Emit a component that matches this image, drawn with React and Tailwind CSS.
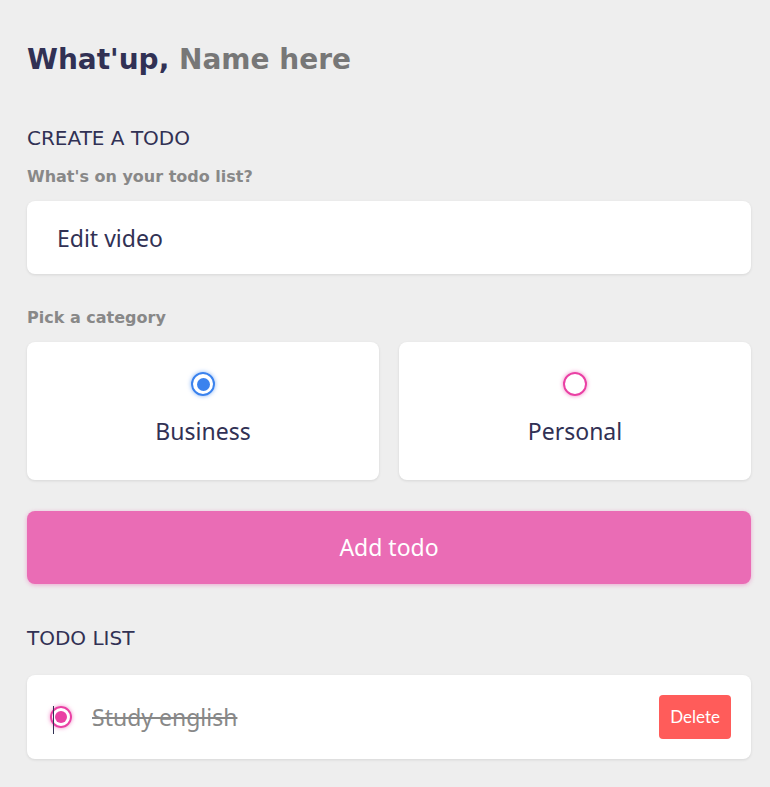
import { useState } from 'react';

const App = () => {
  const [category, setCategory] = useState('business');
  const [text, setText] = useState('Edit video');

  return (
    <div className="min-h-screen bg-[#eeeeee] pl-[27px] pr-[19px] pt-[38px] pb-8 font-['Noto_Sans',sans-serif] text-[#313154]">
      {/* Greeting */}
      <h2 className="font-['DejaVu_Sans',sans-serif] text-[28px] font-bold leading-[44px] text-[#313154]">
        What'up, <span className="text-[#777777]">Name here</span>
      </h2>

      {/* Create todo */}
      <section className="mt-[42px]">
        <h3 className="font-['DejaVu_Sans',sans-serif] text-[20px] leading-[28px] font-normal uppercase text-[#313154]">Create a todo</h3>
        <h4 className="mt-[13px] font-['DejaVu_Sans',sans-serif] text-[16px] leading-[24px] font-bold text-[#888888]">What's on your todo list?</h4>
        <input
          type="text"
          value={text}
          onChange={(e) => setText(e.target.value)}
          className="mt-[12px] block w-full h-[73px] px-[30px] bg-white rounded-[8px] shadow-[0_1px_3px_rgba(0,0,0,0.1)] text-[23px] text-[#313154] outline-none"
        />

        <h4 className="mt-[32px] font-['DejaVu_Sans',sans-serif] text-[16px] leading-[24px] font-bold text-[#888888]">Pick a category</h4>
        <div className="mt-[12px] grid grid-cols-2 gap-[20px]">
          <label className="flex flex-col items-center h-[138px] pt-[30px] bg-white rounded-[8px] shadow-[0_1px_3px_rgba(0,0,0,0.1)] cursor-pointer">
            <input type="radio" name="category" value="business" checked={category === 'business'} onChange={() => setCategory('business')} className="hidden" />
            <span className="flex items-center justify-center w-[24px] h-[24px] rounded-full border-2 border-[#3a82ee] shadow-[0_0_4px_rgba(58,130,238,0.6)]">
              {category === 'business' && <span className="w-[13px] h-[13px] rounded-full bg-[#3a82ee]" />}
            </span>
            <span className="mt-[19px] text-[23px] leading-[32px]">Business</span>
          </label>
          <label className="flex flex-col items-center h-[138px] pt-[30px] bg-white rounded-[8px] shadow-[0_1px_3px_rgba(0,0,0,0.1)] cursor-pointer">
            <input type="radio" name="category" value="personal" checked={category === 'personal'} onChange={() => setCategory('personal')} className="hidden" />
            <span className="flex items-center justify-center w-[24px] h-[24px] rounded-full border-2 border-[#ea40a4] shadow-[0_0_4px_rgba(234,64,164,0.6)]">
              {category === 'personal' && <span className="w-[13px] h-[13px] rounded-full bg-[#ea40a4]" />}
            </span>
            <span className="mt-[19px] text-[23px] leading-[32px]">Personal</span>
          </label>
        </div>

        <button className="mt-[31px] block w-full h-[73px] bg-[#ea6cb5] rounded-[8px] shadow-[0_1px_4px_rgba(234,64,164,0.4)] text-white text-[23px]">
          Add todo
        </button>
      </section>

      {/* Todo list */}
      <section className="mt-[40px]">
        <h3 className="font-['DejaVu_Sans',sans-serif] text-[20px] leading-[28px] font-normal uppercase text-[#313154]">Todo list</h3>
        <div className="mt-[23px] flex items-center h-[84px] pl-[23px] pr-[20px] bg-white rounded-[8px] shadow-[0_1px_3px_rgba(0,0,0,0.1)]">
          <span className="relative flex items-center justify-center w-[22px] h-[22px] rounded-full border-2 border-[#ea40a4] shadow-[0_0_4px_rgba(234,64,164,0.6)]">
            <span className="w-[12px] h-[12px] rounded-full bg-[#ea40a4]" />
            <span className="absolute left-[1px] top-[-2px] w-px h-[28px] bg-[#313154]" />
          </span>
          <span className="ml-[20px] flex-1 text-[23px] text-[#888888] line-through">Study english</span>
          <button className="h-[44px] px-[11px] bg-[#ff5c5a] rounded-[4px] text-white text-[17px] font-['Lato',sans-serif]">
            Delete
          </button>
        </div>
      </section>
    </div>
  );
};

export default App;
